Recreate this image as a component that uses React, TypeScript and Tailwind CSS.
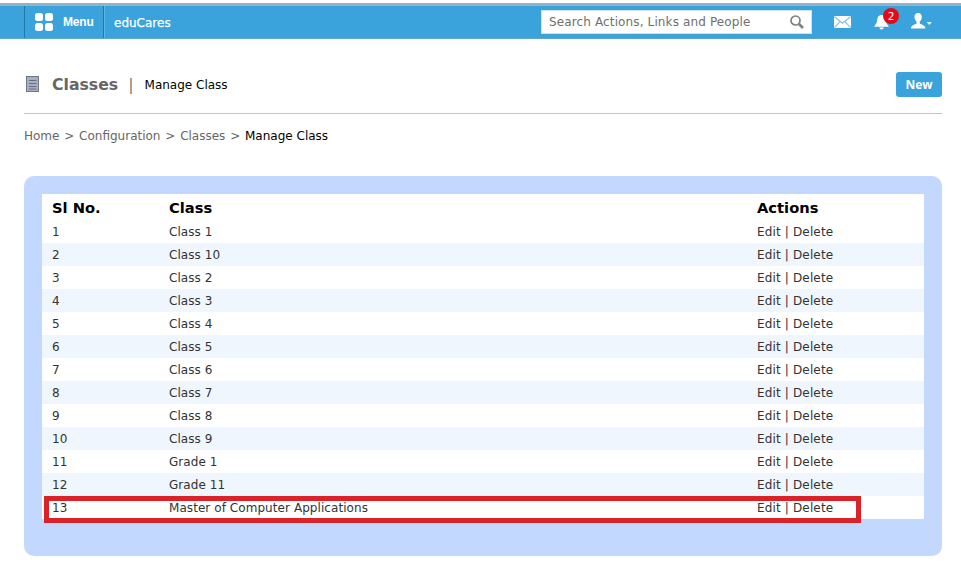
import React from "react";

const classes = [
  "Class 1",
  "Class 10",
  "Class 2",
  "Class 3",
  "Class 4",
  "Class 5",
  "Class 6",
  "Class 7",
  "Class 8",
  "Class 9",
  "Grade 1",
  "Grade 11",
  "Master of Computer Applications",
];

function TopBar() {
  return (
    <header className="mt-[3px] flex h-9 items-stretch border-t-[3px] border-b border-t-[#8fb3c8] border-b-[#5ea5cb] bg-[#3aa3db] text-white">
      <button className="ml-6 flex w-20 items-center border-l border-r border-[#2379a8] pl-[10px] shadow-[1px_0_0_#5db6e4]">
        <svg width="18" height="18" viewBox="0 0 18 18" fill="currentColor">
          <rect x="0" y="0" width="8" height="8" rx="2.5" />
          <rect x="10" y="0" width="8" height="8" rx="2.5" />
          <rect x="0" y="10" width="8" height="8" rx="2.5" />
          <rect x="10" y="10" width="8" height="8" rx="2.5" />
        </svg>
        <span className="ml-[10px] font-['Liberation_Sans',sans-serif] text-[12px] font-bold tracking-[-0.2px]">Menu</span>
      </button>
      <span className="mt-[2px] ml-[10px] self-center [-webkit-text-stroke:0.25px_white]">eduCares</span>
      <div className="mt-[4px] ml-auto flex h-6 w-[271px] items-center justify-between border border-[#cfe3ee] bg-white pr-[7px] pl-[7px] text-[#6f6f6f]">
        <span className="tracking-[0.13px]">Search Actions, Links and People</span>
        <svg width="14" height="14" viewBox="0 0 14 14" fill="none" stroke="#808080">
          <circle cx="5.5" cy="5.5" r="4.5" strokeWidth="1.7" />
          <path d="M9 9l4 4" strokeWidth="2.6" />
        </svg>
      </div>
      <svg className="mt-[10px] ml-[22px]" width="17" height="12" viewBox="0 0 17 12">
        <rect width="17" height="12" rx="1" fill="white" />
        <path d="M0.5 0.8l8 6.4 8-6.4M0.5 11.4l5.4-5.6M16.5 11.4l-5.4-5.6" fill="none" stroke="#7fbfdf" strokeWidth="1.1" />
      </svg>
      <div className="relative ml-[23px] w-[30px]">
        <svg className="mt-[9px] block" width="16" height="15" viewBox="0 0 16 15" fill="white">
          <path d="M7.5 0C4.4 0 3.4 2.6 3.2 5.2 3 8 2 9 0 11.8h15C13 9 12 8 11.8 5.2 11.6 2.6 10.6 0 7.5 0z" />
          <path d="M5.3 12.5h4.400c-.2 1.300-1 2-2.200 2s-2-.7-2.200-2z" />
        </svg>
        <span className="absolute top-[2px] left-[9px] flex h-4 w-4 items-center justify-center rounded-full bg-[#e30b17] text-[10.5px]">2</span>
      </div>
      <svg className="mt-[7px] mr-[28px] ml-[7px]" width="22" height="16" viewBox="0 0 22 16" fill="white">
        <path d="M7 0C4.6 0 3.4 1.7 3.5 4c.1 2.2 1 3.5 2 4.5v2.300C3.500 11.700.4 12 0 15.500h14.400c-.4-3.500-3.600-3.800-5.600-4.700V8.500c1-1 2-2.300 2-4.500C10.900 1.700 9.500 0 7 0z" />
        <path d="M15.500 9h5.500L18.250 12z" opacity=".85" />
      </svg>
    </header>
  );
}

function PageTitle() {
  return (
    <div className="flex h-[75px] items-center border-b border-[#c4c4c4] pt-[17px]">
      <svg className="ml-[2px]" width="14" height="17" viewBox="0 0 14 17">
        <rect x=".5" y=".5" width="12" height="15" fill="#a8afbf" stroke="#6f768b" />
        <path d="M3 4.500h7.500M3 7.500h7.500M3 10.500h7.500M3 13h7.500" stroke="#646c82" />
      </svg>
      <h1 className="ml-[12px] text-[15.700px] font-bold text-[#666]">Classes</h1>
      <span className="ml-[10px] text-[16px] text-[#777]">|</span>
      <span className="mt-px ml-[11px] text-black">Manage Class</span>
      <button className="ml-auto h-[25px] w-[46px] rounded-[3px] bg-[#3aa3db] font-['Open_Sans',sans-serif] text-[12px] font-bold text-white">New</button>
    </div>
  );
}

function Breadcrumb() {
  return (
    <nav className="mt-[14px] flex h-4 items-center gap-[4.8px] text-[#666]">
      <span>Home</span>
      <span>&gt;</span>
      <span>Configuration</span>
      <span>&gt;</span>
      <span>Classes</span>
      <span>&gt;</span>
      <span className="text-black">Manage Class</span>
    </nav>
  );
}

function ClassTable() {
  return (
    <section className="relative mt-[32px] h-[380px] rounded-[10px] bg-[#c3d8fe] p-[18px]">
      <div className="bg-white">
        <div className="grid h-[26px] grid-cols-[117px_588px_1fr] items-center pt-[2px] pl-[10px] text-[14.700px] font-bold text-black">
          <span>Sl No.</span>
          <span>Class</span>
          <span>Actions</span>
        </div>
        {classes.map((name, i) => (
          <div
            key={name}
            className="grid h-[23px] grid-cols-[117px_588px_1fr] items-center pl-[10px] tracking-[0.065px] text-[#333] even:bg-white odd:bg-[#f0f6fe]"
          >
            <span>{i + 1}</span>
            <span>{name}</span>
            <span className="tracking-[0.15px]">Edit | Delete</span>
          </div>
        ))}
      </div>
      <div className="absolute top-[320px] left-[20px] h-[27px] w-[817px] border-[5px] border-[#dc2229]" />
    </section>
  );
}

export default function App() {
  return (
    <div className="h-[565px] w-[961px] overflow-hidden bg-white font-['DejaVu_Sans',sans-serif] text-[12px] leading-4">
      <TopBar />
      <main className="mr-[19px] ml-6">
        <PageTitle />
        <Breadcrumb />
        <ClassTable />
      </main>
    </div>
  );
}
